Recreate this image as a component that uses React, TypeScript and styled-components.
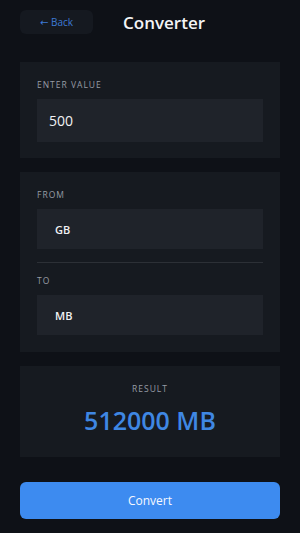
import styled, { createGlobalStyle } from 'styled-components';

const GlobalStyle = createGlobalStyle`
  html, body {
    margin: 0;
    padding: 0;
    background: #0e1117;
  }
  * {
    box-sizing: border-box;
  }
`;

const App = () => {
  return (
    <>
      <GlobalStyle />
      <Page>
        <Header>
          <BackButton>← Back</BackButton>
          <Title>Converter</Title>
        </Header>

        <Card>
          <Label>Enter value</Label>
          <Field $big>500</Field>
        </Card>

        <Card $tall>
          <Label>From</Label>
          <Field>GB</Field>
          <Divider />
          <Label>To</Label>
          <Field>MB</Field>
        </Card>

        <ResultCard>
          <Label>Result</Label>
          <ResultValue>512000 MB</ResultValue>
        </ResultCard>

        <ConvertButton>Convert</ConvertButton>
      </Page>
    </>
  );
};

export default App;

const Page = styled.div`
  width: 300px;
  min-height: 533px;
  padding: 10px 20px 0;
  display: flex;
  flex-direction: column;
  font-family: 'Open Sans', 'DejaVu Sans', sans-serif;
  color: #e8eaed;
`;

const Header = styled.div`
  display: flex;
  align-items: center;
  gap: 30px;
  height: 24px;
  margin-bottom: 28px;
`;

const BackButton = styled.button`
  width: 73px;
  height: 24px;
  border: none;
  border-radius: 6px;
  background: #151920;
  color: #3d7bd6;
  font-family: inherit;
  font-size: 10px;
  padding: 0;
`;

const Title = styled.h1`
  margin: 0;
  font-size: 17px;
  font-weight: 600;
  color: #f3f4f6;
`;

const Card = styled.div<{ $tall?: boolean }>`
  background: #161a20;
  padding: 17px 17px ${(p) => (p.$tall ? '17px' : '16px')};
  display: flex;
  flex-direction: column;
  margin-bottom: 14px;
`;

const ResultCard = styled(Card)`
  align-items: center;
  padding: 17px 17px 20px;
  margin-bottom: 25px;
`;

const Label = styled.div`
  font-size: 8.5px;
  letter-spacing: 1px;
  text-transform: uppercase;
  color: #979ca5;
  margin-bottom: 8px;
  line-height: 12px;
`;

const Field = styled.div<{ $big?: boolean }>`
  height: ${(p) => (p.$big ? '43px' : '40px')};
  background: #1f232a;
  display: flex;
  align-items: center;
  padding-left: ${(p) => (p.$big ? '12px' : '18px')};
  font-size: ${(p) => (p.$big ? '14px' : '11px')};
  font-weight: ${(p) => (p.$big ? 400 : 600)};
  color: #f1f2f4;
`;

const Divider = styled.div`
  height: 1px;
  background: #2c3036;
  margin: 13px 0 12px;
`;

const ResultValue = styled.div`
  font-size: 25px;
  font-weight: 600;
  color: #3f87e3;
  line-height: 34px;
`;

const ConvertButton = styled.button`
  height: 37px;
  border: none;
  border-radius: 6px;
  background: #3d8bf0;
  color: #f5f8ff;
  font-family: inherit;
  font-size: 12px;
`;
